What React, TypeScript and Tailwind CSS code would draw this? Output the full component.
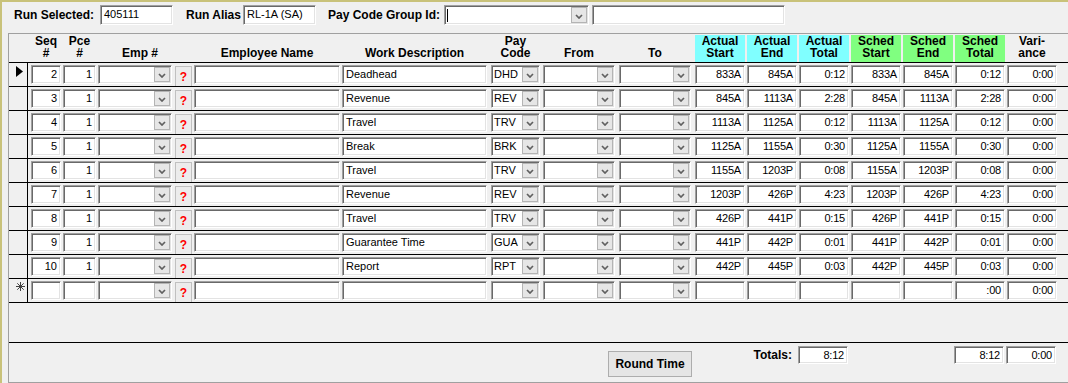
import React from "react";

type Row = {
  seq: string;
  pce: string;
  work: string;
  pay: string;
  times: string[];
};

const rows: Row[] = [
  { seq: "2", pce: "1", work: "Deadhead", pay: "DHD", times: ["833A", "845A", "0:12", "833A", "845A", "0:12", "0:00"] },
  { seq: "3", pce: "1", work: "Revenue", pay: "REV", times: ["845A", "1113A", "2:28", "845A", "1113A", "2:28", "0:00"] },
  { seq: "4", pce: "1", work: "Travel", pay: "TRV", times: ["1113A", "1125A", "0:12", "1113A", "1125A", "0:12", "0:00"] },
  { seq: "5", pce: "1", work: "Break", pay: "BRK", times: ["1125A", "1155A", "0:30", "1125A", "1155A", "0:30", "0:00"] },
  { seq: "6", pce: "1", work: "Travel", pay: "TRV", times: ["1155A", "1203P", "0:08", "1155A", "1203P", "0:08", "0:00"] },
  { seq: "7", pce: "1", work: "Revenue", pay: "REV", times: ["1203P", "426P", "4:23", "1203P", "426P", "4:23", "0:00"] },
  { seq: "8", pce: "1", work: "Travel", pay: "TRV", times: ["426P", "441P", "0:15", "426P", "441P", "0:15", "0:00"] },
  { seq: "9", pce: "1", work: "Guarantee Time", pay: "GUA", times: ["441P", "442P", "0:01", "441P", "442P", "0:01", "0:00"] },
  { seq: "10", pce: "1", work: "Report", pay: "RPT", times: ["442P", "445P", "0:03", "442P", "445P", "0:03", "0:00"] },
];

// spacing + width of each time column, written out in full
const timeCols = [
  "ml-[4px] w-[50px]",
  "ml-[2px] w-[50px]",
  "ml-[2px] w-[50px]",
  "ml-[2px] w-[50px]",
  "ml-[2px] w-[50px]",
  "ml-[2px] w-[50px]",
  "ml-[2px] w-[50px]",
];

const timeHeads = [
  { a: "Actual", b: "Start", bg: "bg-[#80ffff]" },
  { a: "Actual", b: "End", bg: "bg-[#80ffff]" },
  { a: "Actual", b: "Total", bg: "bg-[#80ffff]" },
  { a: "Sched", b: "Start", bg: "bg-[#80ff80]" },
  { a: "Sched", b: "End", bg: "bg-[#80ff80]" },
  { a: "Sched", b: "Total", bg: "bg-[#80ff80]" },
  { a: "Vari-", b: "ance", bg: "" },
];

const sunken =
  "bg-white border border-t-[#a0a0a0] border-l-[#a0a0a0] border-r-white border-b-white shadow-[inset_1px_1px_0_#696969,inset_-1px_-1px_0_#e3e3e3]";

const Box: React.FC<{ cls: string; text?: string; right?: boolean; narrow?: boolean }> = ({
  cls,
  text,
  right,
  narrow,
}) => (
  <div
    className={`${cls} ${sunken} h-[19px] shrink-0 overflow-hidden whitespace-nowrap px-[3px] text-[11px] leading-[17px] ${
      right ? "text-right" : "text-left"
    } ${narrow ? "font-['Liberation_Sans_Narrow','Liberation_Sans',sans-serif] tracking-[-0.2px]" : ""}`}
  >
    {text}
  </div>
);

const Chevron = () => (
  <svg width="8" height="5" viewBox="0 0 8 5">
    <polyline points="1,1 4,4 7,1" fill="none" stroke="#606060" strokeWidth="1.7" />
  </svg>
);

const Combo: React.FC<{ cls: string; text?: string; btn?: string; h?: string }> = ({
  cls,
  text,
  btn = "w-[16px] h-[15px]",
  h = "h-[19px]",
}) => (
  <div className={`${cls} ${sunken} ${h} shrink-0 flex items-center`}>
    <div className="flex-1 overflow-hidden whitespace-nowrap pl-[2px] text-[11px] leading-[17px]">{text}</div>
    <div className={`${btn} mr-[1px] bg-[#e6e6e6] border border-[#b4b4b4] flex items-end justify-center pb-[3px]`}>
      <Chevron />
    </div>
  </div>
);

const Ask = () => (
  <div className="ml-[3px] mt-[3px] w-[17px] h-[20px] shrink-0 bg-[#ececec] border border-b-0 border-[#c0c0c0] flex items-center justify-center text-[12px] font-bold text-[#ff0000]">
    ?
  </div>
);

const Head: React.FC<{ cls: string; a?: string; b: string; bg?: string }> = ({ cls, a, b, bg }) => (
  <div
    className={`${cls} ${bg ?? ""} ${bg ? "mt-[1px] h-[27px]" : "h-[28px]"} shrink-0 flex flex-col items-center justify-end pb-[3px] text-[12px] font-bold leading-[12px]`}
  >
    {a && <span>{a}</span>}
    <span>{b}</span>
  </div>
);

const Arrow = () => (
  <svg width="7" height="11" viewBox="0 0 7 11">
    <polygon points="0,0 7,5.5 0,11" fill="#000" />
  </svg>
);

const Star = () => (
  <svg width="9" height="9" viewBox="0 0 9 9">
    <g stroke="#404040" strokeWidth="1">
      <line x1="4.5" y1="0" x2="4.5" y2="9" />
      <line x1="0" y1="4.5" x2="9" y2="4.5" />
      <line x1="1.3" y1="1.3" x2="7.7" y2="7.7" />
      <line x1="7.7" y1="1.3" x2="1.3" y2="7.7" />
    </g>
  </svg>
);

const DataRow: React.FC<{ row?: Row; current?: boolean }> = ({ row, current }) => {
  const isNew = !row;
  const times = row ? row.times : ["", "", "", "", "", ":00", "0:00"];
  return (
    <div className="flex h-[24px] items-start border-b border-black">
      <div className="w-[19px] h-full shrink-0 border-r border-black pl-[7px] pt-[3px]">
        {current && <Arrow />}
        {isNew && <Star />}
      </div>
      <Box cls="ml-[3px] mt-[2px] w-[30px]" text={row?.seq} right />
      <Box cls="ml-[2px] mt-[2px] w-[33px]" text={row?.pce} right />
      <Combo cls="ml-[2px] mt-[2px] w-[74px]" />
      <Ask />
      <Box cls="ml-[2px] mt-[2px] w-[146px]" />
      <Box cls="ml-[2px] mt-[2px] w-[145px]" text={row?.work} />
      <Combo cls="ml-[4px] mt-[2px] w-[49px]" text={row?.pay} />
      <Combo cls="ml-[3px] mt-[2px] w-[72px]" />
      <Combo cls="ml-[4px] mt-[2px] w-[72px]" />
      {timeCols.map((c, i) => (
        <Box key={i} cls={`${c} mt-[2px]`} text={times[i]} right narrow />
      ))}
    </div>
  );
};

export default function App() {
  return (
    <div className="w-[1068px] h-[383px] overflow-hidden bg-[#f0f0f0] border-t-2 border-l-2 border-[#c9c27a] font-['Liberation_Sans',Arial,sans-serif] text-black">
      {/* top bar */}
      <div className="h-[31px] flex items-start">
        <div className="ml-[12px] mt-[3px] w-[86px] h-[20px] flex items-center text-[12px] font-bold">Run Selected:</div>
        <Box cls="mt-[3px] w-[73px] !h-[20px]" text="405111" />
        <div className="ml-[13px] mt-[3px] w-[57px] h-[20px] flex items-center text-[12px] font-bold">Run Alias</div>
        <Box cls="mt-[3px] w-[73px] !h-[20px]" text="RL-1A (SA)" />
        <div className="ml-[12px] mt-[3px] w-[116px] h-[20px] flex items-center text-[12px] font-bold">Pay Code Group Id:</div>
        <div className={`mt-[3px] w-[145px] h-[20px] ${sunken} flex items-center`}>
          <div className="flex-1 pl-[2px] flex items-center">
            <span className="w-px h-[13px] bg-black" />
          </div>
          <div className="w-[16px] h-[16px] mr-[1px] bg-[#e6e6e6] border border-[#b4b4b4] flex items-end justify-center pb-[3px]">
            <Chevron />
          </div>
        </div>
        <Box cls="ml-[3px] mt-[3px] w-[193px] !h-[20px]" />
      </div>

      {/* grid */}
      <div className="ml-[6px] border-l border-t border-[#a0a0a0]">
        <div className="flex h-[29px] items-start border-b border-black">
          <div className="w-[19px] shrink-0" />
          <Head cls="ml-[3px] w-[30px]" a="Seq" b="#" />
          <Head cls="ml-[2px] w-[33px]" a="Pce" b="#" />
          <Head cls="ml-[2px] w-[74px] pl-[10px]" b="Emp #" />
          <div className="ml-[3px] w-[17px] shrink-0" />
          <Head cls="ml-[2px] w-[146px]" b="Employee Name" />
          <Head cls="ml-[2px] w-[145px]" b="Work Description" />
          <Head cls="ml-[4px] w-[49px]" a="Pay" b="Code" />
          <Head cls="ml-[3px] w-[72px]" b="From" />
          <Head cls="ml-[4px] w-[72px]" b="To" />
          {timeHeads.map((h, i) => (
            <Head key={i} cls={timeCols[i]} a={h.a} b={h.b} bg={h.bg || undefined} />
          ))}
        </div>

        {rows.map((r, i) => (
          <DataRow key={i} row={r} current={i === 0} />
        ))}
        <DataRow />

        <div className="h-[40px] border-b border-black" />

        {/* totals footer */}
        <div className="h-[40px] flex items-start border-b border-[#a0a0a0]">
          <button className="ml-[599px] mt-[8px] w-[84px] h-[26px] shrink-0 bg-[#e5e5e5] border border-[#adadad] text-[12px] font-bold">
            Round Time
          </button>
          <div className="mt-[3px] w-[106px] h-[18px] shrink-0 flex items-center justify-end pr-[6px] text-[12px] font-bold">
            Totals:
          </div>
          <Box cls="mt-[3px] w-[50px] !h-[18px]" text="8:12" right narrow />
          <Box cls="ml-[106px] mt-[3px] w-[50px] !h-[18px]" text="8:12" right narrow />
          <Box cls="ml-[2px] mt-[3px] w-[50px] !h-[18px]" text="0:00" right narrow />
        </div>
      </div>
    </div>
  );
}
